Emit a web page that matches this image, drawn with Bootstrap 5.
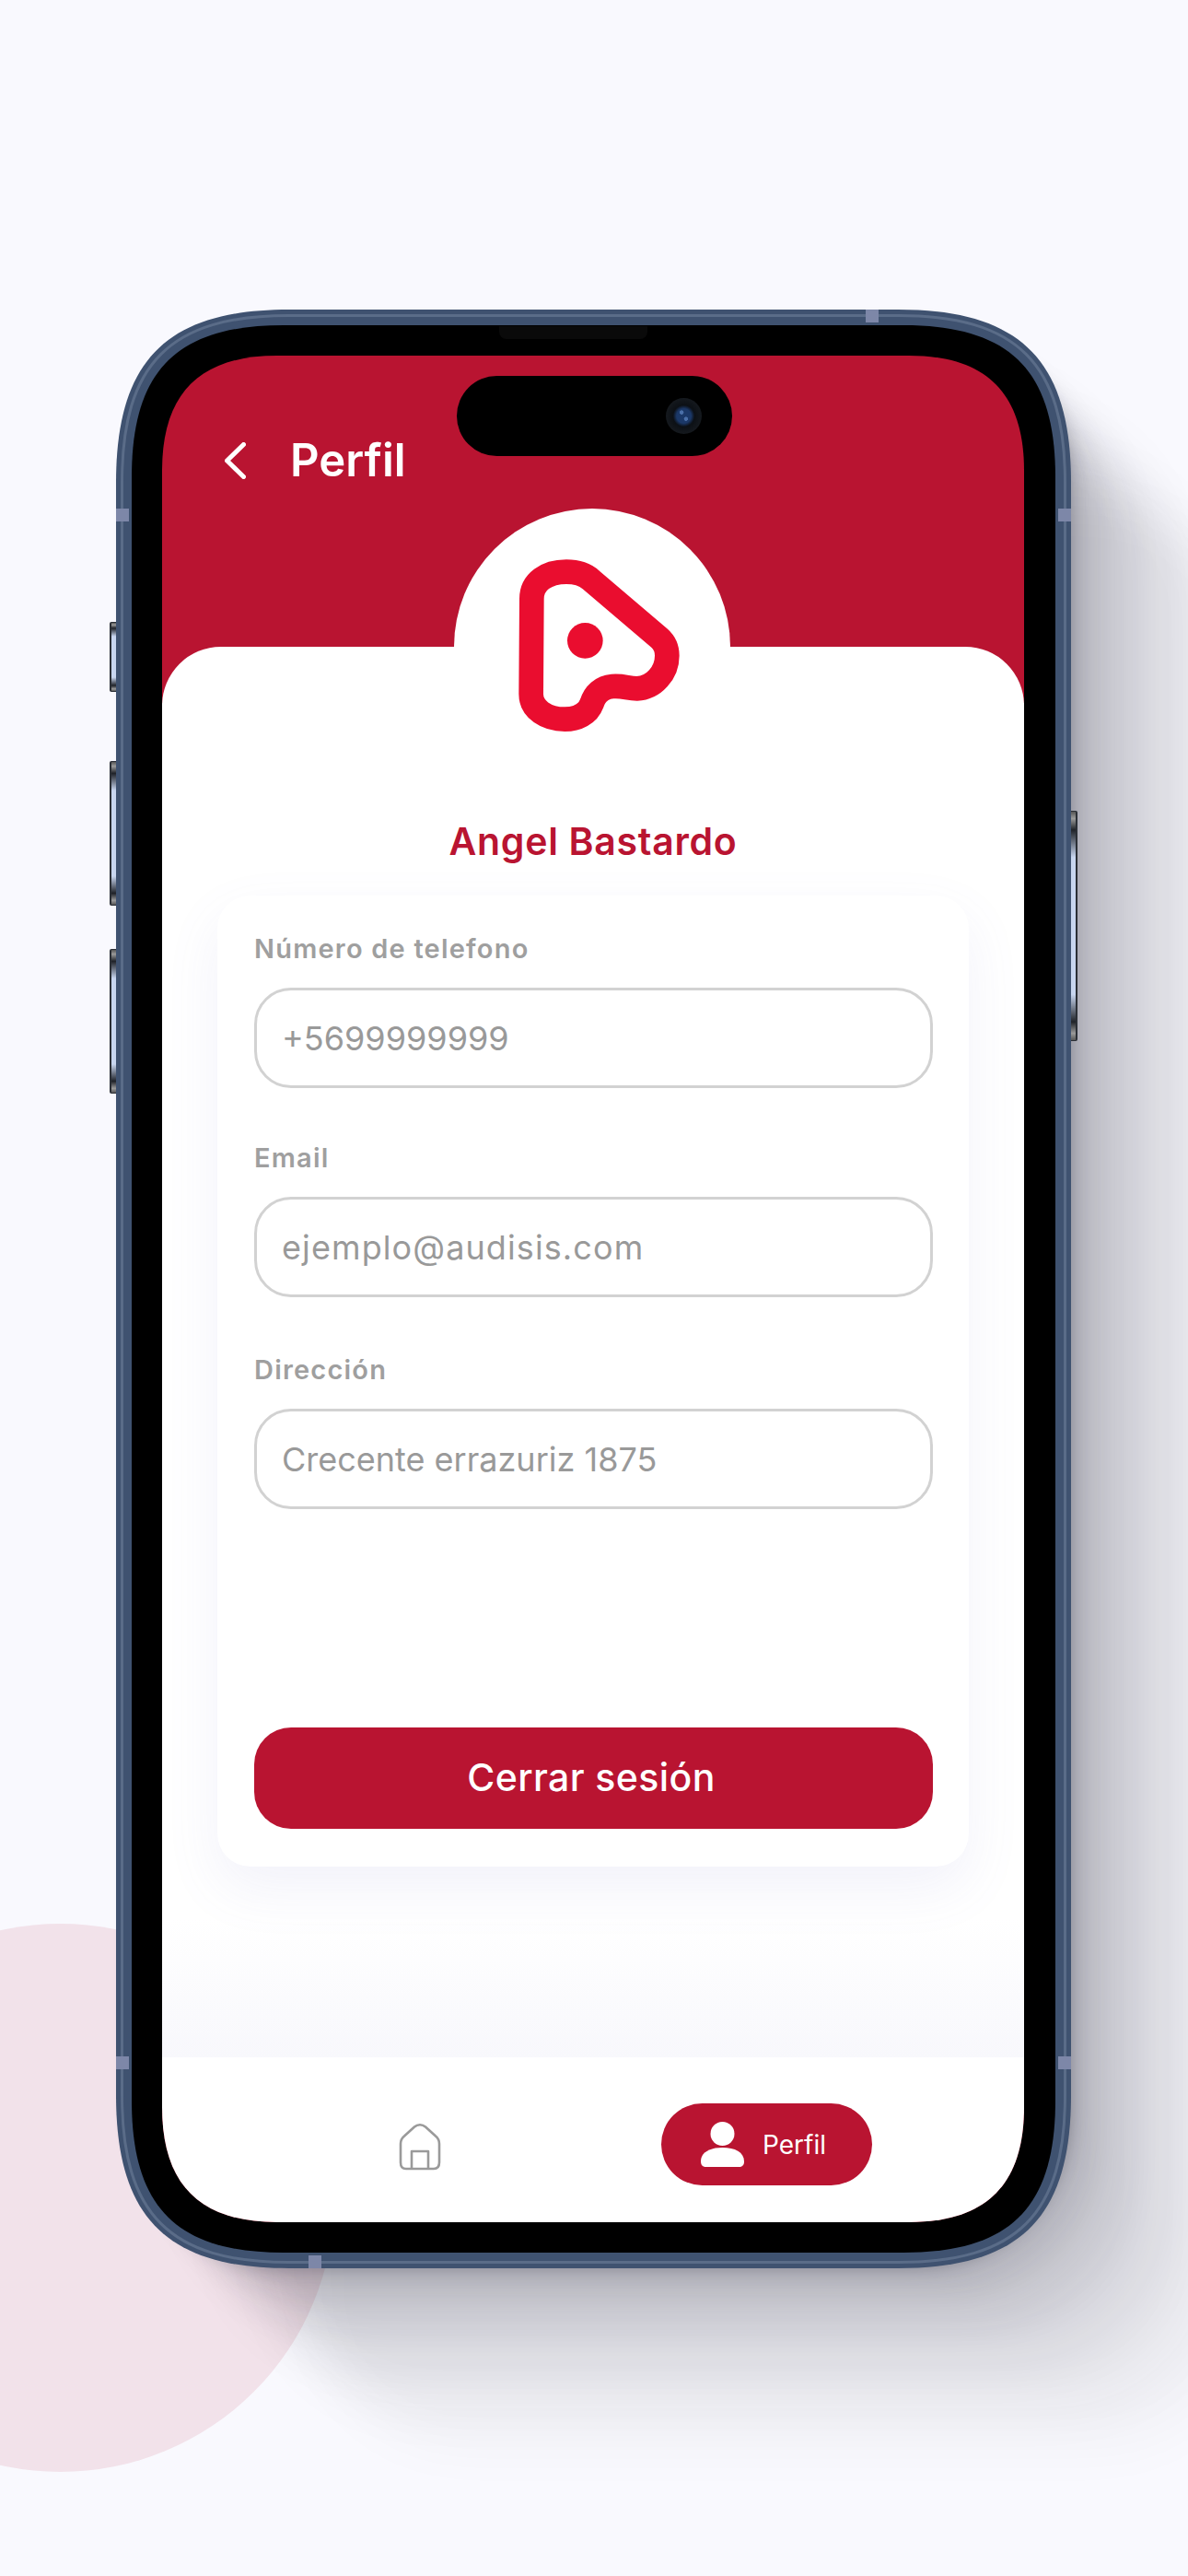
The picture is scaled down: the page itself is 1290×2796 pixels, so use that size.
<!doctype html>
<html lang="es">
<head>
<meta charset="utf-8">
<title>Perfil</title>
<link rel="stylesheet" href="https://cdn.jsdelivr.net/npm/bootstrap@5.3.0/dist/css/bootstrap.min.css">
<style>
html,body{height:2796px;overflow:hidden}
body{background:#f9f9fe;font-family:Inter,"Open Sans",sans-serif;position:relative;padding:336px 0 0 126px}
.blob{position:absolute;left:-232px;top:2088px;width:595px;height:595px;border-radius:50%;background:#f2e2ea}
.phone{position:relative;width:1037px;height:2126px;padding:50px 51px 50px 50px}
.cast{position:absolute;inset:8px;border-radius:170px;
 box-shadow:8px 8px 18px rgba(30,30,45,.30),30px 30px 30px rgba(30,30,45,.10),64px 64px 44px rgba(30,30,45,.09),110px 110px 56px rgba(30,30,45,.08),160px 160px 60px rgba(30,30,45,.05),205px 205px 60px rgba(30,30,45,.03)}
.shell{position:absolute;left:0;top:0;width:1037px;height:2126px}
.screen{position:relative;height:100%;overflow:hidden;background:#b91431;display:flex;flex-direction:column;
 clip-path:path("M125 0H811C895 0 936 41 936 125V1901C936 1985 895 2026 811 2026H125C41 2026 0 1985 0 1901V125C0 41 41 0 125 0Z")}
.band{position:absolute;background:#7d87a8;width:14px;height:14px}
.btn-side{position:absolute;width:7px;left:-7px;border:1px solid #2b2f36;border-right:0;border-left-width:2px;border-radius:2px 0 0 2px;
 background:linear-gradient(#555 0,#9a9a9a 3%,#1f2228 8%,#c8d6f0 20%,#c8d6f0 80%,#1f2228 92%,#9a9a9a 97%,#555 100%)}
.speaker{position:absolute;left:416px;top:18px;width:161px;height:14px;background:#0a0a0a;border-radius:0 0 8px 8px}
.island{position:absolute;left:370px;top:72px;width:299px;height:87px;border-radius:44px;background:#000;z-index:3}
.lens{position:absolute;right:33px;top:24px;width:39px;height:39px;border-radius:50%;background:radial-gradient(circle at 44% 40%,#4a6fa8 0,#4a6fa8 6%,transparent 8%),radial-gradient(circle at 56% 58%,#4a6fa8 0,#4a6fa8 6%,transparent 8%),radial-gradient(closest-side,#1b3868 0,#1b3868 40%,#0c1015 60%,#15191e 100%)}
.topbar{height:316px;flex:none;padding:94px 0 0 68px;gap:48px;color:#fff}
.topbar h1{font-size:49px;font-weight:600;line-height:46px;margin:-3px 0 0}
.sheet{position:relative;height:1531px;flex:none;background:linear-gradient(#fff 0,#fff 1380px,#f8f8fc 100%);border-radius:64px 64px 0 0;padding:0 60px}
.halo{position:absolute;left:317px;top:-150px;width:300px;height:300px;border-radius:50%;background:#fff}
.halo svg{position:absolute;left:-13px;top:-12px;width:320px;height:280px}
.who{font-size:41px;font-weight:600;letter-spacing:.7px;color:#b91431;line-height:48px;margin:0;padding-top:187px;text-align:center}
.formbox{margin-top:35px;height:1054px;background:#fff;border-radius:36px;padding:40px 39px 40px 40px;box-shadow:0 24px 60px rgba(110,110,200,.09)}
.formbox .form-label{display:block;font-size:29px;font-weight:600;letter-spacing:1.2px;color:#9f9f9f;line-height:36px;margin:0 0 24px}
.formbox .form-control{height:109px;border:3px solid #d2d2d2;border-radius:40px;padding:0 27px;font-size:36px;color:#999;box-shadow:none}
.formbox .form-control::placeholder{color:#999;opacity:1}
.formbox .roomy{letter-spacing:1.1px}
.field{margin-bottom:58px}
.field.wide{margin-bottom:61px}
.logout{display:block;width:100%;height:110px;margin-top:237px;padding:0 5px 0 0;background:#b91431;border:0;border-radius:40px;color:#fff;font-size:41px;letter-spacing:.4px;font-weight:500}
.tabs{height:179px;flex:none;background:#fff;padding:10px 165px 0 257px}
.homeic{margin-top:4px}
.pill{width:229px;height:89px;border-radius:45px;background:#b91431;color:#fff;font-size:28px;gap:20px;padding-left:43px}
</style>
</head>
<body>
<div class="blob"></div>
<div class="phone">
 <div class="cast"></div>
 <div class="btn-side" style="top:339px;height:76px"></div>
 <div class="btn-side" style="top:490px;height:157px"></div>
 <div class="btn-side" style="top:694px;height:157px"></div>
 <div class="btn-side" style="top:544px;height:250px;left:auto;right:-7px;transform:scaleX(-1)"></div>
 <svg class="shell" viewBox="0 0 1037 2126" aria-hidden="true">
  <path fill="#3f5270" d="M188 0H849C982 0 1037 55 1037 188V1938C1037 2071 982 2126 849 2126H188C55 2126 0 2071 0 1938V188C0 55 55 0 188 0Z"/>
  <path fill="none" stroke="#5a6c88" stroke-width="3" d="M187.500 6.500H849.500C978.500 6.500 1030.500 58.500 1030.500 187.500V1938.500C1030.500 2067.500 978.500 2119.500 849.500 2119.500H187.500C58.500 2119.500 6.500 2067.500 6.500 1938.500V187.500C6.500 58.500 58.500 6.500 187.500 6.500Z"/>
  <path fill="#000" d="M182 17H855C971 17 1020 66 1020 182V1944C1020 2060 971 2109 855 2109H182C66 2109 17 2060 17 1944V182C17 66 66 17 182 17Z"/>
 </svg>
 <div class="screen">
  <header class="topbar d-flex align-items-start">
   <svg width="23" height="40" viewBox="0 0 23 40" fill="none" stroke="#fff" stroke-width="5" stroke-linecap="round" stroke-linejoin="round" aria-hidden="true"><path d="M20.500 2.500 2.500 20l18 17.500"/></svg>
   <h1>Perfil</h1>
  </header>
  <main class="sheet">
   <div class="halo">
    <svg viewBox="0 0 960 840" aria-hidden="true"><path d="M292 330C292 275 340 242 405 242C440 242 465 250 485 268L708 458C725 473 733 492 733 515C733 570 690 620 635 622C605 622 590 612 555 615C520 618 497 640 488 670C475 705 440 722 400 722C340 722 290 690 290 640Z" fill="none" stroke="#ea0d2f" stroke-width="80" stroke-linejoin="round"/><circle cx="466" cy="466" r="58" fill="#ea0d2f"/></svg>
   </div>
   <h2 class="who">Angel Bastardo</h2>
   <form class="formbox">
    <div class="field"><label class="form-label" for="tel">Número de telefono</label><input id="tel" class="form-control" type="text" placeholder="+5699999999"></div>
    <div class="field wide"><label class="form-label" for="mail">Email</label><input id="mail" class="form-control roomy" type="text" placeholder="ejemplo@audisis.com"></div>
    <div class="field"><label class="form-label" for="dir">Dirección</label><input id="dir" class="form-control" type="text" placeholder="Crecente errazuriz 1875"></div>
    <button type="button" class="btn logout">Cerrar sesión</button>
   </form>
  </main>
  <nav class="tabs d-flex justify-content-between align-items-center">
   <svg class="homeic" width="46" height="52" viewBox="0 0 46 52" fill="none" stroke="#9a9a9a" stroke-width="2.6" stroke-linejoin="round" aria-label="Inicio"><path d="M2 23C2 19 3 17 6 14.500L17 4.500C20.500 1.500 25.500 1.500 29 4.500L40 14.500C43 17 44 19 44 23V43C44 48 42 50 38 50H8C4 50 2 48 2 43Z"/><path d="M14 50V31H32V50"/></svg>
   <div class="pill d-flex align-items-center">
    <svg width="47" height="50" viewBox="0 0 47 50" fill="#fff" aria-hidden="true"><circle cx="23.500" cy="13" r="13"/><path d="M0 43C0 33 10 28 23.500 28S47 33 47 43C47 47 45 49 41 49H6C2 49 0 47 0 43Z"/></svg>
    <span>Perfil</span>
   </div>
  </nav>
 </div>
 <div class="speaker"></div>
 <div class="island"><div class="lens"></div></div>
 <i class="band" style="left:814px;top:0"></i>
 <i class="band" style="left:0;top:216px"></i>
 <i class="band" style="right:0;top:216px"></i>
 <i class="band" style="left:0;top:1896px"></i>
 <i class="band" style="right:0;top:1896px"></i>
 <i class="band" style="left:209px;bottom:0"></i>
</div>
</body>
</html>
